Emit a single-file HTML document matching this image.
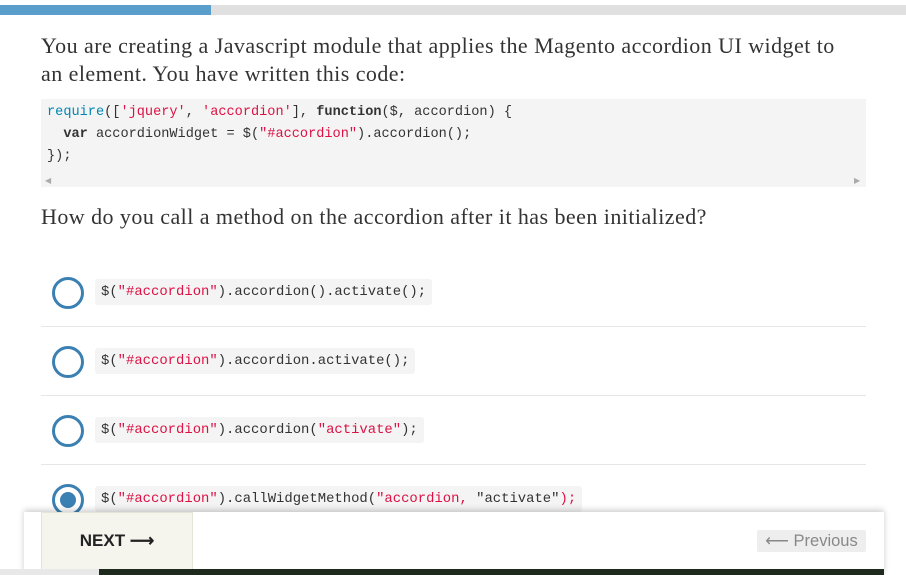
<!DOCTYPE html>
<html><head><style>
body{margin:0;width:906px;height:575px;overflow:hidden;background:#fff;position:relative;font-family:"Liberation Serif",serif;color:#333}
.a{position:absolute}
.mono{font-family:"Liberation Mono",monospace}
.q{font-size:22px;line-height:28px;letter-spacing:0.45px}
.opt{position:absolute;left:52px;width:26px;height:26px;border:3px solid #3b80b2;border-radius:50%}
.pill{position:absolute;left:95px;height:26px;background:#f4f4f4;border-radius:3px;font-size:13.9px;line-height:26px;padding:0 6px;color:#333;white-space:pre}
.s{color:#dd1144}
.sep{position:absolute;left:41px;width:825px;height:1px;background:#e6e6e6}
</style></head><body>
<div class="a" style="left:0;top:5px;width:211px;height:10px;background:#5a9fcb"></div>
<div class="a" style="left:211px;top:5px;width:695px;height:10px;background:#e0e0e0"></div>
<div class="a q" style="left:41px;top:32px;width:812px">You are creating a Javascript module that applies the Magento accordion UI widget to an element. You have written this code:</div>
<div class="a" style="left:41px;top:99px;width:825px;height:88px;background:#f4f4f4"></div>
<div class="a mono" style="left:47px;top:102px;font-size:13.6px;line-height:22px;white-space:pre;color:#333"><span style="color:#0086b3">require</span>([<span class="s">'jquery'</span>, <span class="s">'accordion'</span>], <b>function</b>($, accordion) {
  <b>var</b> accordionWidget = $(<span class="s">"#accordion"</span>).accordion();
});</div>
<div class="a" style="left:45px;top:176px;font-size:8px;color:#aaa">◀</div>
<div class="a" style="left:854px;top:176px;font-size:8px;color:#aaa">▶</div>
<div class="a q" style="left:41px;top:203px">How do you call a method on the accordion after it has been initialized?</div>

<div class="opt" style="top:277px"></div>
<div class="pill mono" style="top:279px">$(<span class="s">"#accordion"</span>).accordion().activate();</div>
<div class="sep" style="top:326px"></div>
<div class="opt" style="top:346px"></div>
<div class="pill mono" style="top:348px">$(<span class="s">"#accordion"</span>).accordion.activate();</div>
<div class="sep" style="top:395px"></div>
<div class="opt" style="top:415px"></div>
<div class="pill mono" style="top:417px">$(<span class="s">"#accordion"</span>).accordion(<span class="s">"activate"</span>);</div>
<div class="sep" style="top:464px"></div>
<div class="opt" style="top:484px"><div class="a" style="left:5px;top:5px;width:16px;height:16px;border-radius:50%;background:#3b80b2"></div></div>
<div class="pill mono" style="top:486px">$(<span class="s">"#accordion"</span>).callWidgetMethod(<span class="s">"accordion, </span>"activate"<span class="s">);</span></div>

<div class="a" style="left:24px;top:512px;width:860px;height:63px;background:#fff;box-shadow:0 -2px 6px rgba(0,0,0,.2)"></div>
<div class="a" style="left:41px;top:512px;width:150px;height:56px;background:#f5f5ee;border:1px solid #e4e4d8;font-family:'Liberation Sans',sans-serif;font-weight:bold;font-size:17px;line-height:56px;text-align:center;color:#222">NEXT ⟶</div>
<div class="a" style="left:757px;top:530px;width:109px;height:22px;background:#eee;border-radius:2px;font-family:'Liberation Sans',sans-serif;font-size:16.5px;line-height:22px;text-align:center;color:#888">⟵ Previous</div>
<div class="a" style="left:0;top:569px;width:99px;height:6px;background:#e8e8e8"></div>
<div class="a" style="left:99px;top:569px;width:785px;height:6px;background:#1f2a1f"></div>
</body></html>
